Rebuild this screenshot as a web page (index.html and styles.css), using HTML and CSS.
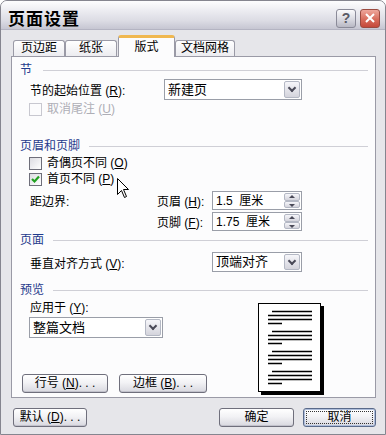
FILE: index.html
```html
<!DOCTYPE html>
<html lang="zh-CN">
<head>
    <meta charset="UTF-8">
    <title>页面设置</title>
    <link rel="stylesheet" href="styles.css">
</head>
<body>
    <div class="window">
        <div class="titlebar">
            <span class="title">页面设置</span>
            <div class="caption-btns">
                <span class="cap-btn help">?</span>
                <span class="cap-btn close">
                    <svg width="12" height="12" viewBox="0 0 12 12"><path d="M2 2 L10 10 M10 2 L2 10" stroke="#fff" stroke-width="2" fill="none"/></svg>
                </span>
            </div>
        </div>

        <div class="body">
            <div class="tabs">
                <div class="tab t1">页边距</div>
                <div class="tab t2">纸张</div>
                <div class="tab t3 active">版式</div>
                <div class="tab t4">文档网格</div>
            </div>

            <div class="panel">
                <!-- 节 -->
                <div class="group-title g1"><span>节</span></div>
                <div class="row row-start">
                    <span>节的起始位置 (<u>R</u>):</span>
                    <div class="select">新建页<span class="drop"></span></div>
                </div>
                <div class="check-row disabled r-endnote">
                    <span class="checkbox"></span>
                    <span>取消尾注 (<u>U</u>)</span>
                </div>

                <!-- 页眉和页脚 -->
                <div class="group-title g2"><span>页眉和页脚</span></div>
                <div class="check-row r-odd">
                    <span class="checkbox"></span>
                    <span>奇偶页不同 (<u>O</u>)</span>
                </div>
                <div class="check-row r-first">
                    <span class="checkbox checked">
                        <svg width="11" height="11" viewBox="0 0 11 11"><path d="M2 5 L4.5 7.5 L9 2.5" stroke="#21a121" stroke-width="2.2" fill="none"/></svg>
                    </span>
                    <span>首页不同 (<u>P</u>)</span>
                </div>
                <div class="row row-spin r-header">
                    <span>距边界:</span>
                    <span>页眉 (<u>H</u>):</span>
                    <div class="spin">1.5&nbsp; 厘米<span class="spin-btns"><i class="up"></i><i class="down"></i></span></div>
                </div>
                <div class="row row-spin r-footer">
                    <span></span>
                    <span>页脚 (<u>F</u>):</span>
                    <div class="spin">1.75&nbsp; 厘米<span class="spin-btns"><i class="up"></i><i class="down"></i></span></div>
                </div>

                <!-- 页面 -->
                <div class="group-title g3"><span>页面</span></div>
                <div class="row row-valign">
                    <span>垂直对齐方式 (<u>V</u>):</span>
                    <div class="select">顶端对齐<span class="drop"></span></div>
                </div>

                <!-- 预览 -->
                <div class="group-title g4"><span>预览</span></div>
                <div class="preview">
                    <div class="preview-left">
                        <div class="apply-label">应用于 (<u>Y</u>):</div>
                        <div class="select apply-select">整篇文档<span class="drop"></span></div>
                        <div class="panel-btns">
                            <div class="btn btn-line">行号 (<u>N</u>). . .</div>
                            <div class="btn btn-border">边框 (<u>B</u>). . .</div>
                        </div>
                    </div>
                    <div class="page">
                        <svg width="61" height="87" viewBox="0 0 61 87">
                            <g stroke="#000" stroke-width="1.3">
                                <path d="M13 7.5H53 M9 11.5H53 M9 15.5H53 M9 19.5H23"/>
                                <path d="M13 27.5H53 M9 31.5H53 M9 35.5H53 M9 39.5H23"/>
                                <path d="M13 47.5H53 M9 51.5H53 M9 55.5H53 M9 59.5H23"/>
                                <path d="M13 67.5H53 M9 71.5H53 M9 75.5H53 M9 79.5H23"/>
                            </g>
                        </svg>
                    </div>
                </div>
            </div>

            <div class="footer">
                <div class="btn btn-default">默认 (<u>D</u>). . .</div>
                <div class="footer-right">
                    <div class="btn btn-ok">确定</div>
                    <div class="btn btn-cancel">取消</div>
                </div>
            </div>
        </div>

        <svg class="cursor" width="13" height="21" viewBox="0 0 13 21">
            <path d="M0.5 0.5 L0.5 16.5 L4.5 12.5 L7.5 19.5 L9.5 18.5 L6.5 11.5 L11.5 11.5 Z" fill="#fff" stroke="#000" stroke-width="1"/>
        </svg>
    </div>
</body>
</html>
```

FILE: styles.css
```css
body {
    margin: 0;
    background-color: #fff;
    font-family: "Liberation Sans", "Noto Sans CJK SC", sans-serif;
    font-size: 12px;
    color: #000;
}
u {
    text-decoration: underline;
    text-underline-offset: 1px;
}
.window {
    position: relative;
    width: 386px;
    height: 435px;
    box-sizing: border-box;
    border: 1px solid #85858f;
    border-radius: 7px 7px 0 0;
    background-color: #e6e6ea;
    overflow: hidden;
}
.titlebar {
    display: flex;
    align-items: center;
    justify-content: space-between;
    height: 29px;
    box-sizing: border-box;
    padding: 6px 5px 0 7px;
    background: linear-gradient(#fdfdfe, #ececf1 35%, #dcdce4 70%, #c6c6d2);
    border-bottom: 1px solid #b4b4c2;
}
.title {
    font-family: "Noto Sans CJK SC", sans-serif;
    font-size: 17px;
    font-weight: bold;
    line-height: 20px;
    letter-spacing: 1px;
}
.caption-btns {
    display: flex;
    gap: 4px;
}
.cap-btn {
    display: flex;
    align-items: center;
    justify-content: center;
    width: 20px;
    height: 19px;
    box-sizing: border-box;
    border-radius: 3px;
}
.help {
    border: 1px solid #8a8a98;
    background: linear-gradient(#fafafc, #d6d6de 60%, #b8b8c4);
    color: #5a5a66;
    font-weight: bold;
    font-size: 14px;
    line-height: 17px;
}
.close {
    border: 1px solid #9a4a40;
    background: linear-gradient(#eea79c, #d86c5c 55%, #c4483a);
}
.body {
    padding: 0 9px 0 10px;
}
.tabs {
    display: flex;
    align-items: flex-end;
    height: 26px;
    padding-left: 2px;
}
.tab {
    height: 16px;
    box-sizing: border-box;
    border: 1px solid #9a9aa6;
    border-bottom: none;
    border-radius: 3px 3px 0 0;
    background: linear-gradient(#ffffff, #ececf0);
    text-align: center;
    line-height: 15px;
}
.t1 { width: 52px; }
.t2 { width: 52px; }
.t3 { width: 57px; }
.t4 { width: 60px; }
.tab.active {
    position: relative;
    z-index: 1;
    height: 22px;
    margin-bottom: -1px;
    margin-left: 1px;
    border-top: 3px solid #f0b850;
    background: #fcfcfd;
    line-height: 18px;
}
.panel {
    height: 342px;
    box-sizing: border-box;
    border: 1px solid #9a9aa6;
    background-color: #fcfcfd;
}
.group-title {
    display: flex;
    align-items: center;
    height: 13px;
    padding-left: 8px;
    padding-right: 7px;
    line-height: 13px;
    color: #1f3a8c;
}
.group-title::after {
    content: "";
    flex: 1;
    height: 1px;
    margin-left: 9px;
    background-color: #cfcfd6;
}
.g1 { margin-top: 7px; }
.g1::after { margin-left: 11px; }
.g2 { margin-top: 24px; }
.g3 { margin-top: 3px; }
.g4 { margin-top: 12px; }

.row {
    display: grid;
    align-items: center;
    padding-left: 18px;
}
.row-start {
    grid-template-columns: 134px 138px;
    height: 21px;
    margin-top: 2px;
}
.row-spin {
    grid-template-columns: 127px 55px 90px;
    height: 19px;
}
.r-header { margin-top: 5px; }
.r-footer { margin-top: 2px; }
.row-valign {
    grid-template-columns: 182px 90px;
    height: 20px;
    margin-top: 5px;
}
.check-row {
    display: flex;
    align-items: center;
    gap: 5px;
    height: 13px;
    padding-left: 17px;
    line-height: 13px;
}
.r-endnote { margin-top: 3px; }
.r-odd { margin-top: 4px; }
.r-first { margin-top: 3px; }
.check-row.disabled {
    color: #aeaeb6;
}
.checkbox {
    display: flex;
    align-items: center;
    justify-content: center;
    width: 13px;
    height: 13px;
    box-sizing: border-box;
    border: 1px solid #6e6e7a;
    background: linear-gradient(135deg, #dcdce2, #ffffff);
}
.disabled .checkbox {
    border-color: #c8c8d0;
    background: #fcfcfd;
}
.select, .spin {
    position: relative;
    height: 100%;
    box-sizing: border-box;
    border: 1px solid #9a9ea8;
    background-color: #fff;
    padding-left: 3px;
    display: flex;
    align-items: center;
    line-height: 14px;
}
.select {
    font-size: 13px;
}
.drop {
    position: absolute;
    top: 1px;
    right: 1px;
    bottom: 1px;
    width: 16px;
    box-sizing: border-box;
    border: 1px solid #b4b8c4;
    border-radius: 2px;
    background: linear-gradient(#f6f6fa, #d4d4dc);
}
.drop::after {
    content: "";
    position: absolute;
    left: 4px;
    top: 3px;
    width: 4px;
    height: 4px;
    border-right: 2px solid #4a4a58;
    border-bottom: 2px solid #4a4a58;
    transform: rotate(45deg);
}
.spin-btns {
    position: absolute;
    top: 1px;
    right: 1px;
    bottom: 1px;
    width: 16px;
    display: flex;
    flex-direction: column;
}
.spin-btns i {
    flex: 1;
    position: relative;
    box-sizing: border-box;
    border: 1px solid #b4b8c4;
    border-radius: 2px;
    background: linear-gradient(#f6f6fa, #d4d4dc);
}
.spin-btns i::after {
    content: "";
    position: absolute;
    left: 4px;
    width: 0;
    height: 0;
    border-left: 3px solid transparent;
    border-right: 3px solid transparent;
}
.spin-btns .up::after {
    top: 1px;
    border-bottom: 3px solid #4a4a58;
}
.spin-btns .down::after {
    top: 2px;
    border-top: 3px solid #4a4a58;
}

.preview {
    display: flex;
    margin-top: 5px;
}
.preview-left {
    width: 246px;
    padding-left: 10px;
    box-sizing: border-box;
}
.apply-label {
    height: 12px;
    line-height: 12px;
    padding-left: 8px;
}
.apply-select {
    width: 134px;
    height: 21px;
    margin-top: 3px;
    margin-left: 7px;
}
.panel-btns {
    display: flex;
    gap: 11px;
    margin-top: 36px;
}
.btn {
    height: 19px;
    box-sizing: border-box;
    border: 1px solid #6f6f7c;
    border-radius: 3px;
    background: linear-gradient(#ffffff, #f2f2f5 45%, #d8d8df);
    box-shadow: inset 0 -1px 0 #c2c2cc;
    text-align: center;
    line-height: 17px;
}
.btn-line { width: 86px; }
.btn-border { width: 88px; }
.page {
    width: 61px;
    height: 87px;
    margin-top: 1px;
    border: 1px solid #000;
    background-color: #fff;
    box-shadow: 3px 3px 0 #000;
}
.page svg {
    display: block;
}
.footer {
    display: flex;
    justify-content: space-between;
    margin-top: 10px;
    padding-left: 2px;
}
.footer-right {
    display: flex;
    gap: 9px;
}
.btn-default { width: 74px; }
.btn-ok { width: 75px; }
.btn-cancel {
    position: relative;
    width: 73px;
    border-color: #5a6a8a;
    box-shadow: inset 0 0 0 1px #aebedc;
}
.btn-cancel::after {
    content: "";
    position: absolute;
    top: 2px;
    left: 2px;
    right: 2px;
    bottom: 2px;
    border: 1px dotted #333;
}
.cursor {
    position: absolute;
    left: 116px;
    top: 177px;
}
```
